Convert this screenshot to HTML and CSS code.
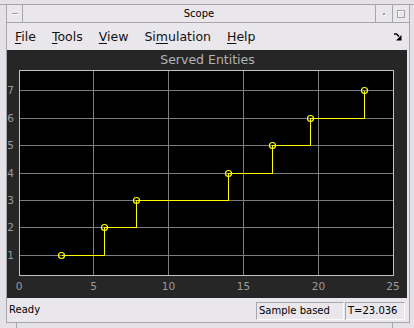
FILE: index.html
```html
<!DOCTYPE html>
<html lang="en">
<head>
  <meta charset="UTF-8">
  <title>Scope</title>
  <link rel="stylesheet" href="styles.css">
</head>
<body>
  <div class="topline"></div>
  <div class="wm">
    <div class="titlebar">
      <div class="tb-btn tb-min"><span class="dash"></span></div>
      <div class="tb-title">Scope</div>
      <div class="tb-btn tb-shade"><span class="dot"></span></div>
      <div class="tb-btn tb-max"><span class="square"></span></div>
    </div>

    <div class="menubar">
      <span class="menu"><u>F</u>ile</span>
      <span class="menu"><u>T</u>ools</span>
      <span class="menu"><u>V</u>iew</span>
      <span class="menu">Si<u>m</u>ulation</span>
      <span class="menu"><u>H</u>elp</span>
      <svg class="dock" width="8" height="8" viewBox="0 0 8 8">
        <path d="M0 1H2.5L5 3.5" stroke="#000" stroke-width="1.5" fill="none"/>
        <polygon points="7.5,2 7.5,7.5 2,7.5" fill="#000"/>
      </svg>
    </div>

    <div class="plot">
      <svg width="400" height="248" viewBox="0 0 400 248">
        <text class="plot-title" x="200.5" y="14">Served Entities</text>
        <rect x="12.5" y="20.5" width="374" height="205" fill="#000"/>
        <g class="grid">
          <line x1="86.5" y1="21" x2="86.5" y2="225"/>
          <line x1="161.5" y1="21" x2="161.5" y2="225"/>
          <line x1="236.5" y1="21" x2="236.5" y2="225"/>
          <line x1="311.5" y1="21" x2="311.5" y2="225"/>
          <line x1="13" y1="40.5" x2="386" y2="40.5"/>
          <line x1="13" y1="68.5" x2="386" y2="68.5"/>
          <line x1="13" y1="95.5" x2="386" y2="95.5"/>
          <line x1="13" y1="123.5" x2="386" y2="123.5"/>
          <line x1="13" y1="150.5" x2="386" y2="150.5"/>
          <line x1="13" y1="177.5" x2="386" y2="177.5"/>
          <line x1="13" y1="205.5" x2="386" y2="205.5"/>
        </g>
        <rect class="axes" x="12.5" y="20.5" width="374" height="205"/>
        <g class="ylabels">
          <text x="7" y="44">7</text>
          <text x="7" y="72">6</text>
          <text x="7" y="99">5</text>
          <text x="7" y="127">4</text>
          <text x="7" y="154">3</text>
          <text x="7" y="181">2</text>
          <text x="7" y="209">1</text>
        </g>
        <g class="xlabels">
          <text x="12" y="240">0</text>
          <text x="86.5" y="240">5</text>
          <text x="161.5" y="240">10</text>
          <text x="236.5" y="240">15</text>
          <text x="311.5" y="240">20</text>
          <text x="386" y="240">25</text>
        </g>
        <polyline class="trace" points="54.5,205.5 97.5,205.5 97.5,177.5 129.5,177.5 129.5,150.5 221.5,150.5 221.5,123.5 265.5,123.5 265.5,95.5 303.5,95.5 303.5,68.5 357.5,68.5 357.5,40.5"/>
        <g class="marks">
          <circle cx="54.5" cy="205.5" r="3"/>
          <circle cx="97.5" cy="177.5" r="3"/>
          <circle cx="129.5" cy="150.5" r="3"/>
          <circle cx="221.5" cy="123.5" r="3"/>
          <circle cx="265.5" cy="95.5" r="3"/>
          <circle cx="303.5" cy="68.5" r="3"/>
          <circle cx="357.5" cy="40.5" r="3"/>
        </g>
      </svg>
    </div>

    <div class="statusbar">
      <span class="status-text">Ready</span>
      <span class="status-box sample">Sample based</span>
      <span class="status-box time">T=23.036</span>
    </div>
  </div>
  <div class="bottom">
    <span class="handle-left"></span>
    <span class="handle-right"></span>
  </div>
</body>
</html>
```

FILE: styles.css
```css
body {
  margin: 0;
  width: 414px;
  height: 328px;
  overflow: hidden;
  background-color: #e4e2e7;
  font-family: 'DejaVu Sans', sans-serif;
  color: #000;
}
.topline {
  height: 4px;
  border-bottom: 1px solid #a6a6aa;
}
.wm {
  margin-left: 6px;
  width: 402px;
  border-left: 1px solid #a6a6aa;
  border-right: 1px solid #a6a6aa;
  border-bottom: 1px solid #a6a6aa;
  background-color: #e9e7ec;
}
.titlebar {
  display: flex;
  height: 17px;
  border-bottom: 1px solid #a6a6aa;
}
.tb-btn {
  display: flex;
  align-items: center;
  justify-content: center;
}
.tb-min {
  width: 15px;
  border-right: 1px solid #a6a6aa;
}
.tb-title {
  flex: 1;
  text-align: center;
  font-size: 10px;
  line-height: 17px;
}
.tb-shade {
  width: 16px;
  border-left: 1px solid #a6a6aa;
}
.tb-max {
  width: 16px;
  border-left: 1px solid #a6a6aa;
}
.dash {
  width: 6px;
  height: 1px;
  background-color: #9a9a9e;
  box-shadow: 0 1px 0 #fff;
}
.dot {
  width: 2px;
  height: 2px;
  background-color: #9a9a9e;
  box-shadow: 1px 1px 0 #fff;
}
.square {
  width: 6px;
  height: 6px;
  border: 1px solid #a6a6aa;
  box-shadow: inset 1px 1px 0 #fff;
}
.menubar {
  display: flex;
  align-items: center;
  gap: 16px;
  height: 26px;
  padding-left: 8px;
  font-size: 12.5px;
  color: #111;
}
.menu u {
  text-decoration-thickness: 1px;
  text-underline-offset: 2px;
}
.dock {
  margin-left: auto;
  margin-right: 7px;
  margin-top: 1px;
}
.plot {
  margin-top: 1px;
  width: 400px;
  height: 248px;
  background-color: #262626;
}
.plot svg {
  display: block;
}
.plot-title {
  font-family: 'DejaVu Sans', sans-serif;
  font-size: 12.5px;
  fill: #b4b4b4;
  text-anchor: middle;
}
.grid line {
  stroke: #7c7c7c;
  stroke-width: 1;
  shape-rendering: crispEdges;
}
.axes {
  fill: none;
  stroke: #c4c4c4;
  stroke-width: 1;
  shape-rendering: crispEdges;
}
.ylabels text, .xlabels text {
  font-family: 'DejaVu Sans', sans-serif;
  font-size: 10.5px;
  fill: #9c9c9c;
}
.ylabels text {
  text-anchor: end;
}
.xlabels text {
  text-anchor: middle;
}
.trace {
  fill: none;
  stroke: #ffff00;
  stroke-width: 1;
  shape-rendering: crispEdges;
}
.marks circle {
  fill: none;
  stroke: #ffff00;
  stroke-width: 1.2;
}
.statusbar {
  display: flex;
  align-items: flex-start;
  gap: 1px;
  height: 20px;
  padding: 4px 4px 0 2px;
  font-size: 10px;
}
.status-text {
  line-height: 14px;
  margin-top: 1px;
}
.status-box {
  box-sizing: border-box;
  height: 18px;
  line-height: 16px;
  padding-left: 2px;
  border: 1px solid #a8a8ac;
  border-right-color: #fbfbfb;
  border-bottom-color: #fbfbfb;
}
.sample {
  margin-left: auto;
  width: 88px;
}
.time {
  width: 60px;
}
.bottom {
  display: flex;
  height: 5px;
}
.handle-left {
  width: 16px;
  border-right: 1px solid #a6a6aa;
}
.handle-right {
  width: 375px;
  border-right: 1px solid #a6a6aa;
}
```
